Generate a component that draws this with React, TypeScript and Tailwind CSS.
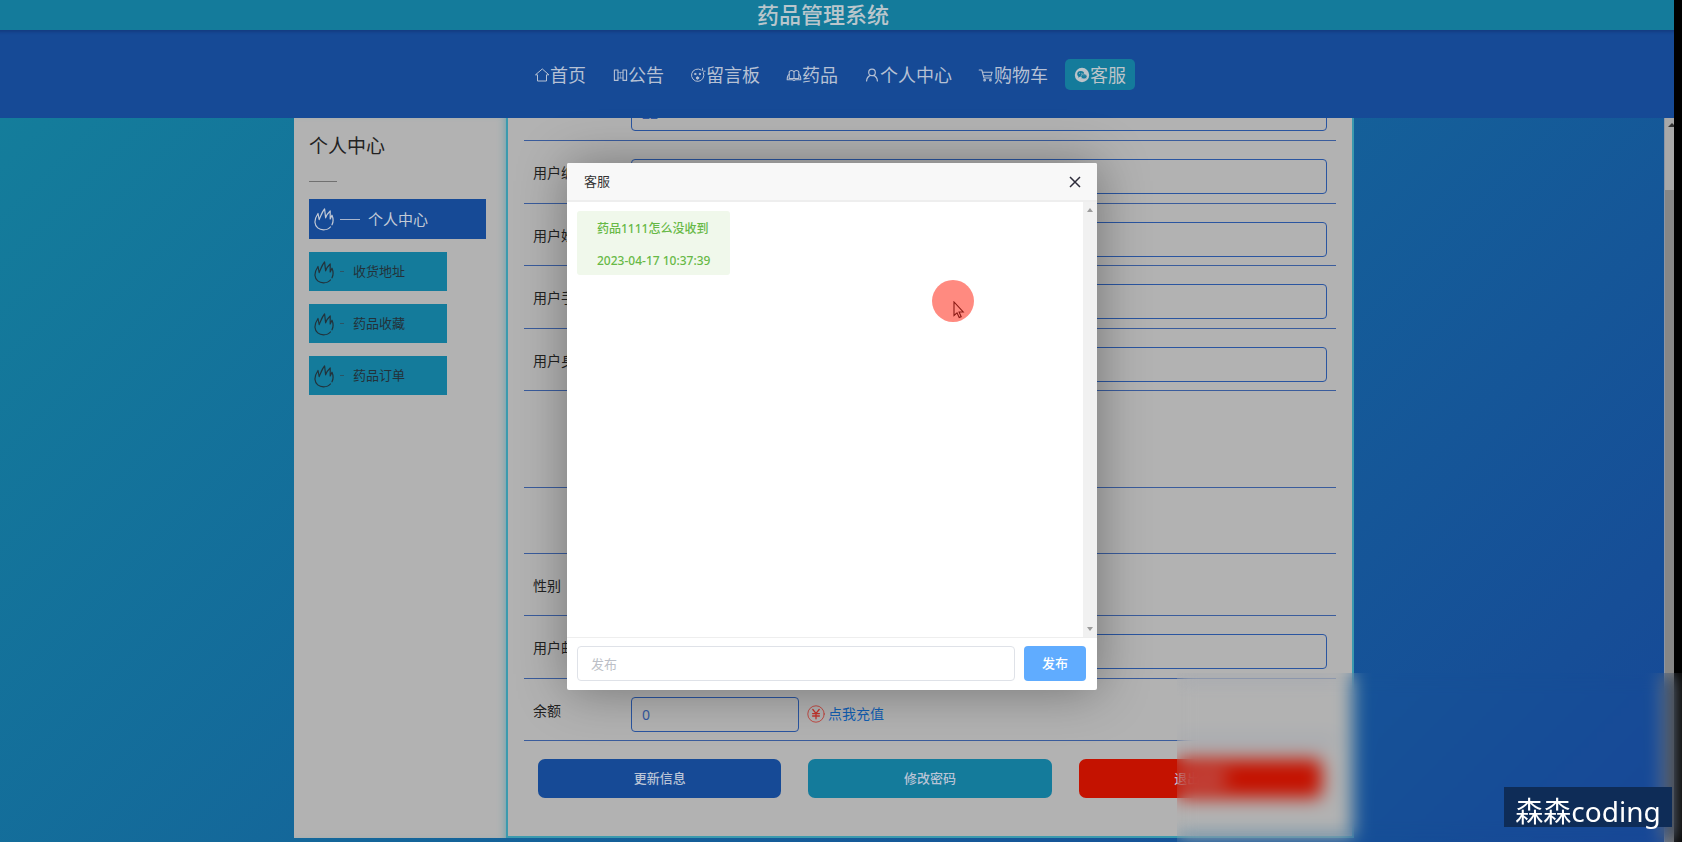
import React from "react";

type IconProps = { className?: string };

const stroke = {
  fill: "none",
  stroke: "currentColor",
  strokeLinecap: "round",
  strokeLinejoin: "round",
} as const;

function HomeIcon() {
  return (
    <svg viewBox="0 0 16 16" className="size-4" strokeWidth="1" {...stroke} aria-hidden="true">
      <path d="M8 2.2 1.5 7.8H3.5V14H12.5V7.8H14.5Z" />
    </svg>
  );
}

function NoticeIcon() {
  return (
    <svg viewBox="0 0 16 16" className="size-4" strokeWidth="1.1" {...stroke} aria-hidden="true">
      <path d="M2.4 3H6V13.4H2.4ZM11 3H14.6V13.4H11Z" />
      <path d="M6 5.4H11M6 11H11" strokeWidth="0.7" />
      <path d="M8.5 5.4V11" strokeWidth="0.5" />
    </svg>
  );
}

function FaceIcon() {
  return (
    <svg viewBox="0 0 16 16" className="size-4" strokeWidth="1" {...stroke} aria-hidden="true">
      <path d="M11.2 3A6.2 6.2 0 1 0 13.4 5.6" />
      <path d="M12.6 1.2V3.4M13.6 4.2H15.2" />
      <circle cx="5.2" cy="7" r="0.7" fill="currentColor" />
      <circle cx="9.8" cy="7" r="0.7" fill="currentColor" />
      <circle cx="7.5" cy="11" r="1.2" fill="currentColor" />
    </svg>
  );
}

function BookIcon() {
  return (
    <svg viewBox="0 0 16 16" className="size-4" strokeWidth="1.1" {...stroke} aria-hidden="true">
      <path d="M8 5V11.5M8 5C7 3 4 3 3.2 5V11.5H12.8V5C12 3 9 3 8 5Z" />
      <path d="M3.2 7.5C1.8 8 1.2 9 1.2 12.8H6.5L8 13.5 9.5 12.8H14.8C14.8 9 14.2 8 12.8 7.5" />
    </svg>
  );
}

function UserIcon() {
  return (
    <svg viewBox="0 0 16 16" className="size-4" strokeWidth="1.2" {...stroke} aria-hidden="true">
      <circle cx="8" cy="5.4" r="3.3" />
      <path d="M2.6 14C2.8 11 4.4 9.2 6.4 8.4M13.4 14C13.2 11 11.6 9.2 9.6 8.4" />
    </svg>
  );
}

function CartIcon() {
  return (
    <svg viewBox="0 0 16 16" className="size-4" strokeWidth="1.1" {...stroke} aria-hidden="true">
      <path d="M1.2 3H3.8L6 11H13.2M4.4 5.2H14.2L13 8.8H5.4" />
      <circle cx="6.6" cy="13.2" r="0.8" />
      <circle cx="12.4" cy="13.2" r="0.8" />
    </svg>
  );
}

function ChatIcon() {
  return (
    <svg viewBox="0 0 16 16" className="size-4" aria-hidden="true">
      <circle cx="8" cy="8" r="7.2" fill="currentColor" />
      <ellipse cx="6.7" cy="6.9" rx="3.5" ry="2.9" fill="#147b9b" />
      <path d="M4.6 9 4.2 10.8 6.4 9.6Z" fill="#147b9b" />
      <ellipse cx="10" cy="9.4" rx="3" ry="2.5" fill="#147b9b" stroke="#bcc4c9" strokeWidth="0.6" />
      <circle cx="5.6" cy="6.2" r="0.5" fill="#bcc4c9" />
      <circle cx="7.9" cy="6.2" r="0.5" fill="#bcc4c9" />
      <circle cx="9.1" cy="8.8" r="0.4" fill="#bcc4c9" />
      <circle cx="11" cy="8.8" r="0.4" fill="#bcc4c9" />
    </svg>
  );
}

function FlameIcon({ className }: IconProps) {
  return (
    <svg viewBox="0 0 20 24" className={className} strokeWidth="1.2" {...stroke} aria-hidden="true">
      <path d="M16.4 20C15 21.8 12.5 22.8 9.5 22.8C5 22.8 1.4 20 1 15.5C.8 12.5 2 9.5 4 6.5L5.2 12.6C6.6 9.4 8 5 10.6 2L11.6 10.8C12.6 8 14 6 16.2 4L16.2 12L18 8.2C19.4 11.5 19.4 15 18 17.8" />
    </svg>
  );
}

function YuanIcon() {
  return (
    <svg viewBox="0 0 18 18" className="size-[18px] text-[#c4342c]" strokeWidth="1" {...stroke} aria-hidden="true">
      <circle cx="9" cy="9" r="8.2" strokeWidth="0.8" />
      <path d="M5.8 4.5 9 8.4 12.2 4.5M9 8.4V13.8M5.6 8.6H12.4M5.6 11H12.4" strokeWidth="1.3" />
    </svg>
  );
}

const navItems = [
  { label: "首页", icon: <HomeIcon /> },
  { label: "公告", icon: <NoticeIcon /> },
  { label: "留言板", icon: <FaceIcon /> },
  { label: "药品", icon: <BookIcon /> },
  { label: "个人中心", icon: <UserIcon /> },
  { label: "购物车", icon: <CartIcon /> },
  { label: "客服", icon: <ChatIcon />, active: true },
];

const sideItems = ["收货地址", "药品收藏", "药品订单"];

function Field({ id, label }: { id: string; label: string }) {
  return (
    <div className="flex items-start border-b border-[#3a5c9c] pt-[18px] pr-[9px] pl-[9px]">
      <label htmlFor={id} className="w-[98px] shrink-0 text-sm leading-[27px]">
        {label}
      </label>
      <input
        id={id}
        type="text"
        className="h-[35px] min-w-0 flex-1 rounded border border-[#2a55a0] px-[10px] text-sm text-[#3458a0] outline-none"
      />
    </div>
  );
}

function Sidebar() {
  return (
    <aside className="flex w-[212px] shrink-0 flex-col bg-[#b2b2b2] pl-[15px] shadow-[inset_-6px_0_8px_-6px_#5d9fae]">
      <h2 className="mt-3 text-[19px] leading-8 text-[#222]">个人中心</h2>
      <div className="mt-[19px] w-7 border-t border-[#707070]" />
      <nav className="mt-[17px] flex flex-col gap-[13px] text-[#23323a]">
        <a href="#center" className="mr-5 flex h-10 items-center bg-[#164a96] pl-[5px] text-[15px] text-[#c3cad6]">
          <FlameIcon className="h-6 w-5" />
          <span className="ml-[6px] w-5 border-t border-[#a9b6cd]" />
          <span className="ml-[8px]">个人中心</span>
        </a>
        {sideItems.map((t) => (
          <a key={t} href="#section" className="flex h-[39px] w-[138px] items-center bg-[#147b9b] pl-[5px] text-[13px]">
            <FlameIcon className="h-6 w-5" />
            <span className="ml-[6px] w-1 border-t border-[#2c5566]" />
            <span className="ml-[9px]">{t}</span>
          </a>
        ))}
      </nav>
    </aside>
  );
}

function ProfilePanel() {
  return (
    <section className="flex min-w-0 flex-1 flex-col border-x-2 border-b-2 border-[#3b9aae] bg-[#b2b2b2] px-4 text-[#222]">
      <div className="flex h-[23px] shrink-0 flex-col justify-end overflow-hidden border-b border-[#3a5c9c] pr-[9px] pb-[9px] pl-[107px]">
        <input
          type="text"
          aria-label="账户"
          defaultValue="22"
          className="h-[35px] w-full shrink-0 rounded border border-[#2a55a0] px-[10px] text-sm text-[#3458a0] outline-none"
        />
      </div>
      <div className="grid h-[250px] shrink-0 auto-rows-fr">
        <Field id="code" label="用户编号" />
        <Field id="name" label="用户姓名" />
        <Field id="phone" label="用户手机号" />
        <Field id="idcard" label="用户身份证号" />
      </div>
      <div className="h-[97px] shrink-0 border-b border-[#3a5c9c]" />
      <div className="h-[66px] shrink-0 border-b border-[#3a5c9c]" />
      <div className="grid h-[187px] shrink-0 auto-rows-fr">
        <div className="border-b border-[#3a5c9c] pt-[18px] pl-[9px] text-sm leading-[27px]">性别</div>
        <Field id="mail" label="用户邮箱" />
        <div className="flex items-start border-b border-[#3a5c9c] pt-[18px] pl-[9px]">
          <label htmlFor="balance" className="w-[98px] shrink-0 text-sm leading-[27px]">
            余额
          </label>
          <input
            id="balance"
            type="text"
            defaultValue="0"
            className="h-[35px] w-[168px] rounded border border-[#2a55a0] px-[10px] text-sm text-[#3458a0] outline-none"
          />
          <a href="#recharge" className="ml-2 flex h-[35px] items-center gap-[3px] text-sm text-[#125fb2]">
            <YuanIcon />
            <span>点我充值</span>
          </a>
        </div>
      </div>
      <div className="mx-[14px] mt-[18px] grid grid-cols-3 gap-[27px] text-[13px] font-medium text-[#b9c4d6]">
        <button type="button" className="h-[39px] rounded-[7px] bg-[#164a96]">更新信息</button>
        <button type="button" className="h-[39px] rounded-[7px] bg-[#147b9b]">修改密码</button>
        <button type="button" className="h-[39px] rounded-[7px] bg-[#c41200]">退出登录</button>
      </div>
    </section>
  );
}

function ServiceDialog() {
  return (
    <div
      role="dialog"
      aria-label="客服"
      className="flex h-[527px] w-[530px] flex-col overflow-hidden rounded-[2px] bg-white shadow-[1px_1px_50px_rgba(0,0,0,0.35)]"
    >
      <header className="flex h-[39px] shrink-0 items-center justify-between border-b-2 border-[#eee] bg-[#f8f8f8] pr-4 pl-[17px] text-[13px] text-[#333]">
        <h3>客服</h3>
        <button type="button" aria-label="关闭" className="text-[#2e2d3c]">
          <svg viewBox="0 0 12 12" className="size-3" fill="none" stroke="currentColor" strokeWidth="1.5" aria-hidden="true">
            <path d="M1 1 11 11M11 1 1 11" />
          </svg>
        </button>
      </header>
      <div className="flex min-h-0 flex-1">
        <div className="flex-1 p-[10px] pt-[9px]">
          <div className="h-16 w-fit rounded-[3px] bg-[#f0f8eb] px-5 pt-[2px] text-xs leading-8 font-medium text-[#67b946]">
            <p>药品1111怎么没收到</p>
            <p>2023-04-17 10:37:39</p>
          </div>
        </div>
        <div className="flex w-[14px] flex-col items-center justify-between bg-[#f1f1f1] py-[6px] text-[#9c9c9c]">
          <svg viewBox="0 0 6 4" className="h-1 w-[6px]" fill="currentColor" aria-hidden="true"><path d="M0 4 3 0 6 4Z" /></svg>
          <svg viewBox="0 0 6 4" className="h-1 w-[6px]" fill="currentColor" aria-hidden="true"><path d="M0 0 3 4 6 0Z" /></svg>
        </div>
      </div>
      <form className="flex shrink-0 gap-[9px] border-t border-[#eee] pt-2 pr-[11px] pb-[9px] pl-[10px]" onSubmit={(e) => e.preventDefault()}>
        <input
          type="text"
          aria-label="发布"
          placeholder="发布"
          className="h-[35px] min-w-0 flex-1 rounded border border-[#dfe2e8] px-[13px] text-[13px] outline-none placeholder:text-[#bcbfc7]"
        />
        <button type="submit" className="h-[35px] w-[62px] rounded bg-[#60acff] text-[13px] font-medium text-white">发布</button>
      </form>
    </div>
  );
}

export default function App() {
  return (
    <div className="relative flex h-screen overflow-hidden bg-black font-['Noto_Sans','Noto_Sans_CJK_SC',sans-serif]">
      <div className="flex min-w-0 flex-1 flex-col">
        <header className="flex h-[30px] shrink-0 items-start justify-center bg-[#147b9b] pt-[3px] pr-[28px]">
          <h1 className="text-[22px] leading-none font-medium text-[#b9c6cc]">药品管理系统</h1>
        </header>
        <nav className="flex h-[88px] shrink-0 items-center justify-center gap-2 bg-[#164a96] pt-px pr-[14px] shadow-[inset_0_5px_3px_-3px_#143c80]">
          {navItems.map((n) => (
            <a
              key={n.label}
              href="#page"
              className={
                n.active
                  ? "flex h-[31px] items-center rounded-[5px] bg-[#147b9b] px-[9px] text-lg text-[#bcc4c9]"
                  : "flex h-[31px] items-center rounded-[5px] px-[9px] text-lg text-[#b6c1d4]"
              }
            >
              {n.icon}
              <span>{n.label}</span>
            </a>
          ))}
        </nav>
        <div className="flex min-h-0 flex-1">
          <main className="flex min-w-0 flex-1 justify-center bg-linear-135 from-[#147d9b] via-[#14669a] via-45% to-[#174796] pr-4 pb-1">
            <div className="flex w-[1060px]">
              <Sidebar />
              <ProfilePanel />
            </div>
          </main>
          <div className="flex w-[10px] shrink-0 flex-col overflow-hidden border-l border-[#8c96a6] bg-[#a8a8a8]">
            <svg viewBox="0 0 9 72" className="h-[72px] w-[9px] shrink-0" aria-hidden="true"><path d="M3 9 7 5 9 7V9Z" fill="#333" /></svg>
            <div className="flex-1 bg-[#868686]" />
          </div>
        </div>
      </div>
      <div className="w-2 shrink-0 bg-black" />

      <div className="absolute inset-0 flex items-start justify-center pt-[163px] pr-[18px]">
        <ServiceDialog />
      </div>

      <div className="absolute top-[280px] left-[932px] size-[42px] rounded-full bg-[#ff8a80]">
        <svg viewBox="0 0 12 18" className="absolute top-[21px] left-[21px] h-[18px] w-3" fill="none" stroke="#8a1a14" strokeWidth="1.1" aria-hidden="true">
          <path d="M1 1V14.5L4 11.8L6.2 16.6L8.2 15.7L6.1 11H10.2Z" />
        </svg>
      </div>

      <div className="absolute right-0 bottom-0 h-[169px] w-[505px] backdrop-blur-[9px]" />
      <div className="absolute right-[10px] bottom-[15px] flex h-10 w-[168px] items-center justify-center bg-[#0e2c57] pt-2 text-[28px] text-white">
        森森coding
      </div>
    </div>
  );
}
